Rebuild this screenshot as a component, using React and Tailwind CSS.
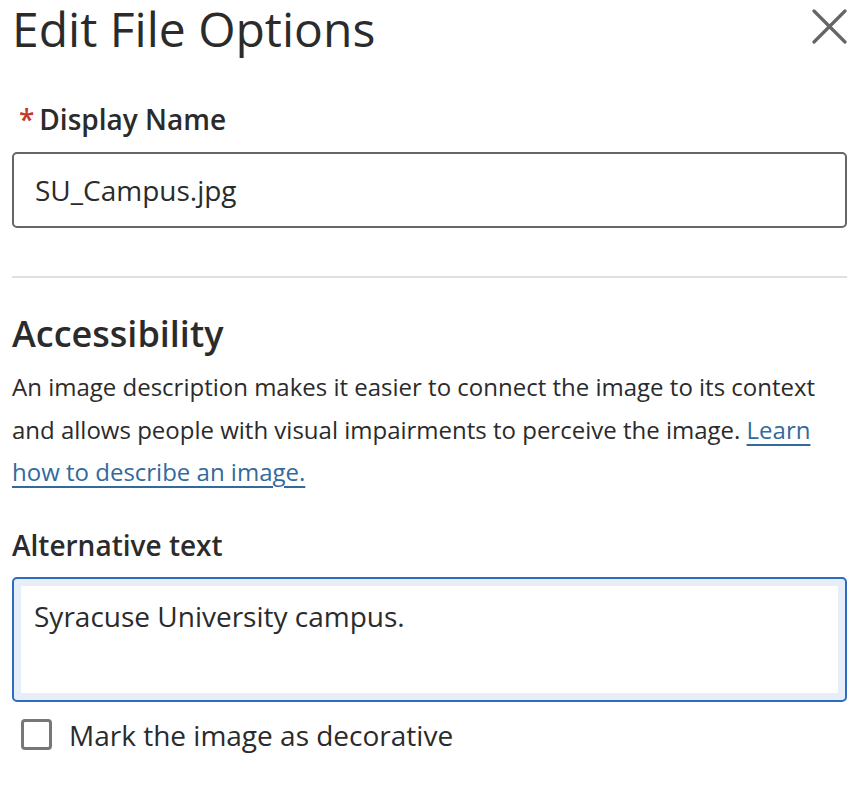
export default function App() {
    return (
        <div className="w-[849px] h-[788px] bg-white pl-[12px] pr-[2px] text-[#2b2b2b] overflow-hidden" style={{ fontFamily: '"Open Sans", "Noto Sans", sans-serif' }}>
            {/* Header */}
            <div className="flex items-start justify-between pt-[1px]">
                <h1 className="text-[48px] leading-[60px] -mt-[2px] font-normal">Edit File Options</h1>
                <button className="mt-[7px] text-[#666]" aria-label="Close">
                    <svg width="36" height="36" viewBox="0 0 36 36" fill="none" stroke="currentColor" strokeWidth="3.2" strokeLinecap="round">
                        <path d="M3 3 L34 34" />
                        <path d="M34 3 L3 34" />
                    </svg>
                </button>
            </div>

            {/* Display name */}
            <label className="block mt-[42px] text-[28px] leading-[36px] font-semibold">
                <span className="text-[#c23b2b] ml-[7px] mr-[5px]">*</span>Display Name
            </label>
            <div className="mt-[15px] h-[76px] border-2 border-[#666] rounded-[5px] flex items-center px-[21px] text-[28px]">
                SU_Campus.jpg
            </div>

            <div className="mt-[48px] h-[2px] bg-[#e0e0e0]" />

            {/* Accessibility */}
            <h2 className="mt-[34px] text-[36px] leading-[44px] font-semibold">Accessibility</h2>
            <p className="mt-[10px] text-[24px] leading-[42.5px]">
                An image description makes it easier to connect the image to its context and allows people with visual impairments to perceive the image.{' '}
                <a href="#" className="text-[#336a9c] underline underline-offset-[5px]">Learn how to describe an image.</a>
            </p>

            <label className="block mt-[33px] text-[28px] leading-[36px] font-semibold">Alternative text</label>
            <div className="mt-[14px] h-[125px] border-2 border-[#2d6cc0] rounded-[5px] bg-[#e7eef8] p-[7px]">
                <div className="h-full bg-white pt-[12px] pl-[13px] text-[28px] leading-[36px]">
                    Syracuse University campus.
                </div>
            </div>

            <div className="mt-[15px] flex items-center gap-[17px] pl-[9px]">
                <span className="w-[31px] h-[31px] border-[3px] border-[#777] rounded-[4px]" />
                <span className="text-[28px] leading-[36px]">Mark the image as decorative</span>
            </div>
        </div>
    );
}
